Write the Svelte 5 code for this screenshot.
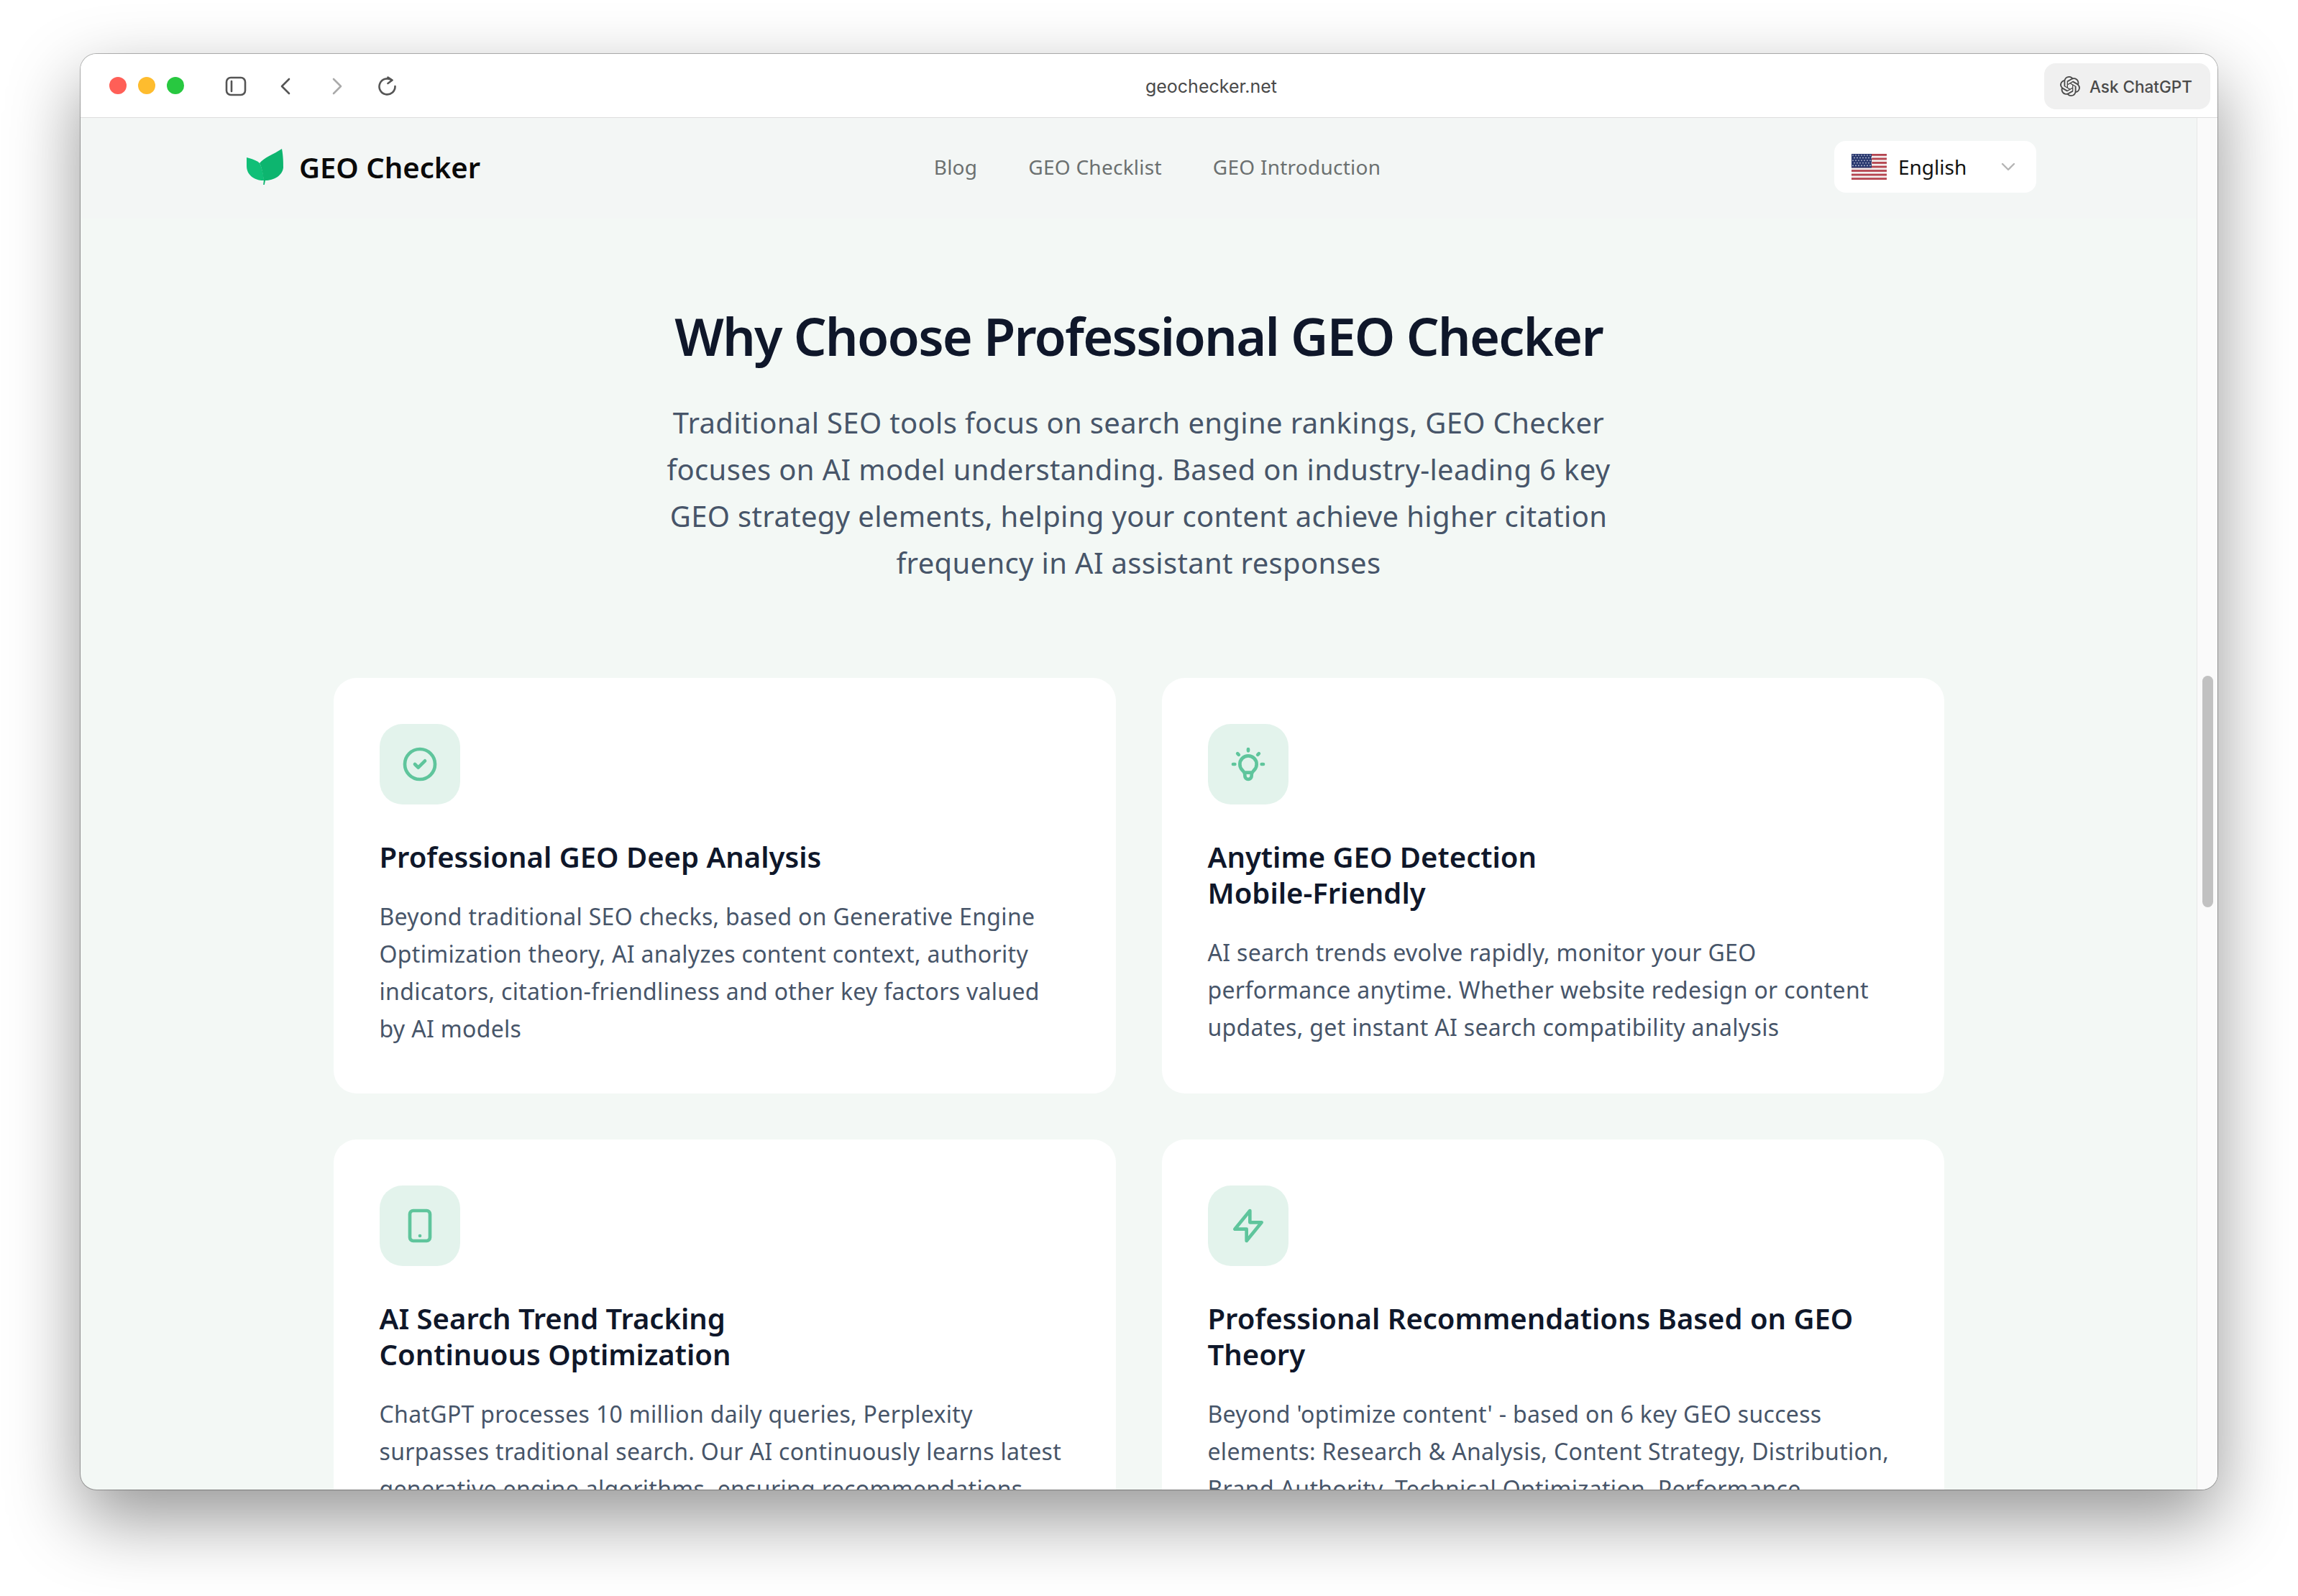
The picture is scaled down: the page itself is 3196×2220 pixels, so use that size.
<script lang="ts">
  const links = ["Blog", "GEO Checklist", "GEO Introduction"];

  const features = [
    {
      icon: ["M9 12l2 2 4-4m6 2a9 9 0 11-18 0 9 9 0 0118 0z"],
      title: ["Professional GEO Deep Analysis"],
      text: "Beyond traditional SEO checks, based on Generative Engine Optimization theory, AI analyzes content context, authority indicators, citation-friendliness and other key factors valued by AI models",
    },
    {
      icon: [
        "M9.663 17h4.673M12 3v1m6.364 1.636l-.707.707M21 12h-1M4 12H3m3.343-5.657l-.707-.707m2.828 9.9a5 5 0 117.072 0l-.548.547A3.374 3.374 0 0014 18.469V19a2 2 0 11-4 0v-.531c0-.895-.356-1.754-.988-2.386l-.548-.547z",
      ],
      title: ["Anytime GEO Detection", "Mobile-Friendly"],
      text: "AI search trends evolve rapidly, monitor your GEO performance anytime. Whether website redesign or content updates, get instant AI search compatibility analysis",
    },
    {
      icon: ["M12 18h.01M8 21h8a2 2 0 002-2V5a2 2 0 00-2-2H8a2 2 0 00-2 2v14a2 2 0 002 2z"],
      title: ["AI Search Trend Tracking", "Continuous Optimization"],
      text: "ChatGPT processes 10 million daily queries, Perplexity surpasses traditional search. Our AI continuously learns latest generative engine algorithms, ensuring recommendations",
    },
    {
      icon: ["M13 10V3L4 14h7v7l9-11h-7z"],
      title: ["Professional Recommendations Based on GEO", "Theory"],
      text: "Beyond 'optimize content' - based on 6 key GEO success elements: Research & Analysis, Content Strategy, Distribution, Brand Authority, Technical Optimization, Performance",
    },
  ];

  const stripes = [0, 1, 2, 3, 4, 5, 6];
  const dots: [number, number][] = [];
  for (let r = 0; r < 5; r++) {
    for (let c = 0; c < 7; c++) dots.push([2 + c * 4 + (r % 2) * 2, 2 + r * 3.6]);
  }
</script>

<div class="stage">
  <div class="window">
    <header class="toolbar">
      <div class="lights">
        <span class="light red"></span>
        <span class="light yellow"></span>
        <span class="light green"></span>
      </div>
      <div class="tools">
        <svg class="tool" width="30" height="28" viewBox="0 0 30 28" fill="none" stroke="#555" stroke-width="2.6">
          <rect x="2" y="2" width="26" height="24" rx="6" />
          <path d="M9 7v14" stroke-linecap="round" />
        </svg>
        <svg class="tool back" width="16" height="24" viewBox="0 0 16 24" fill="none" stroke="#555" stroke-width="2.6" stroke-linecap="round" stroke-linejoin="round">
          <path d="M13 2L3 12l10 10" />
        </svg>
        <svg class="tool forward" width="16" height="24" viewBox="0 0 16 24" fill="none" stroke="#aaa" stroke-width="2.6" stroke-linecap="round" stroke-linejoin="round">
          <path d="M3 2l10 10L3 22" />
        </svg>
        <svg class="tool reload" width="28" height="28" viewBox="0 0 28 28" fill="none" stroke="#555" stroke-width="2.6" stroke-linecap="round" stroke-linejoin="round">
          <path d="M21 5.5A11 11 0 1 0 25.5 14" />
          <path d="M15.5 1.5L21.5 5.500L15.500 10" />
        </svg>
      </div>
      <div class="address">geochecker.net</div>
      <button class="ask">
        <svg width="28" height="28" viewBox="0 0 24 24" fill="#4a4a4a">
          <path d="M22.2819 9.8211a5.9847 5.9847 0 0 0-.5157-4.9108 6.0462 6.0462 0 0 0-6.5098-2.9A6.0651 6.0651 0 0 0 4.9807 4.1818a5.9847 5.9847 0 0 0-3.9977 2.9 6.0462 6.0462 0 0 0 .7427 7.0966 5.98 5.98 0 0 0 .511 4.9107 6.051 6.051 0 0 0 6.5146 2.9001A5.9847 5.9847 0 0 0 13.2599 24a6.0557 6.0557 0 0 0 5.7718-4.2058 5.9894 5.9894 0 0 0 3.9977-2.9001 6.0557 6.0557 0 0 0-.7475-7.0729zm-9.022 12.6081a4.4755 4.4755 0 0 1-2.8764-1.0408l.1419-.0804 4.7783-2.7582a.7948.7948 0 0 0 .3927-.6813v-6.7369l2.02 1.1686a.071.071 0 0 1 .038.052v5.5826a4.504 4.504 0 0 1-4.4945 4.4944zm-9.6607-4.1254a4.4708 4.4708 0 0 1-.5346-3.0137l.142.0852 4.783 2.7582a.7712.7712 0 0 0 .7806 0l5.8428-3.3685v2.3324a.0804.0804 0 0 1-.0332.0615L9.74 19.9502a4.4992 4.4992 0 0 1-6.1408-1.6464zM2.3408 7.8956a4.485 4.485 0 0 1 2.3655-1.9728V11.6a.7664.7664 0 0 0 .3879.6765l5.8144 3.3543-2.0201 1.1685a.0757.0757 0 0 1-.071 0l-4.8303-2.7865A4.504 4.504 0 0 1 2.3408 7.872zm16.5963 3.8558L13.1038 8.364 15.1192 7.2a.0757.0757 0 0 1 .071 0l4.8303 2.7913a4.4944 4.4944 0 0 1-.6765 8.1042v-5.6772a.79.79 0 0 0-.407-.667zm2.0107-3.0231l-.142-.0852-4.7735-2.7818a.7759.7759 0 0 0-.7854 0L9.409 9.2297V6.8974a.0662.0662 0 0 1 .0284-.0615l4.8303-2.7866a4.4992 4.4992 0 0 1 6.6802 4.66zM8.3065 12.863l-2.02-1.1638a.0804.0804 0 0 1-.038-.0567V6.0742a4.4992 4.4992 0 0 1 7.3757-3.4537l-.142.0805L8.704 5.459a.7948.7948 0 0 0-.3927.6813zm1.0976-2.3654l2.602-1.4998 2.6069 1.4998v2.9994l-2.5974 1.4997-2.6067-1.4997Z" />
        </svg>
        <span>Ask ChatGPT</span>
      </button>
    </header>

    <div class="viewport">
      <main class="page">
        <nav class="nav">
          <a class="brand" href="#top">
            <svg width="51" height="50" viewBox="0 0 51 50">
              <path fill="#10bf77" d="M0 12C7 14 14 16 18 20 21 25 23.500 36 24 44L23.300 44C10 44 0 36 0 24Z" />
              <path fill="#0db56f" d="M18 20C24 12 37 8 49 0 51 10 51 20 51 26 50 37 38 44 26 44L24.800 50 23.200 50 23.800 44C23 36 21 25 18 20Z" />
            </svg>
            <span>GEO Checker</span>
          </a>
          <div class="links">
            {#each links as link}
              <a href="#top">{link}</a>
            {/each}
          </div>
          <div class="lang">
            <svg width="49" height="36" viewBox="0 0 49 36" class="flag">
              <rect width="49" height="36" rx="3" fill="#f2eeee" />
              {#each stripes as s}
                <rect y={s * 5.540} width="49" height="2.770" fill="#b5444f" />
              {/each}
              <rect width="28" height="19.400" fill="#2b3a70" />
              {#each dots as d}
                <circle cx={d[0]} cy={d[1]} r="0.800" fill="#dfe3ee" />
              {/each}
            </svg>
            <span class="lang-name">English</span>
            <svg class="caret" width="20" height="12" viewBox="0 0 20 12" fill="none" stroke="#b5b5b5" stroke-width="2.400" stroke-linecap="round" stroke-linejoin="round">
              <path d="M2 2l8 8 8-8" />
            </svg>
          </div>
        </nav>

        <section class="hero">
          <h1>Why Choose Professional GEO Checker</h1>
          <p class="lead">
            Traditional SEO tools focus on search engine rankings, GEO Checker focuses on AI model understanding. Based on industry-leading 6 key GEO strategy elements, helping your content achieve higher citation frequency in AI assistant responses
          </p>

          <div class="grid">
            {#each features as f}
              <article class="card">
                <div class="badge">
                  <svg width="56" height="56" viewBox="0 0 24 24" fill="none" stroke="#5fc59c" stroke-width="2" stroke-linecap="round" stroke-linejoin="round">
                    {#each f.icon as d}
                      <path {d} />
                    {/each}
                  </svg>
                </div>
                <h3>
                  {#each f.title as line}
                    <span>{line}</span>
                  {/each}
                </h3>
                <p>{f.text}</p>
              </article>
            {/each}
          </div>
        </section>
      </main>

      <aside class="scrollbar">
        <div class="thumb"></div>
      </aside>
    </div>
  </div>
</div>

<style>
  :global(body) {
    margin: 0;
    background: #fff;
  }

  .stage {
    width: 3196px;
    height: 2220px;
    box-sizing: border-box;
    padding: 75px 112px 148px;
    overflow: hidden;
    font-family: "Noto Sans", sans-serif;
  }

  .window {
    width: 2972px;
    height: 1997px;
    display: flex;
    flex-direction: column;
    border-radius: 22px;
    overflow: hidden;
    background: #f3f8f5;
    box-shadow:
      0 0 0 1px rgba(0, 0, 0, 0.28),
      0 40px 100px rgba(0, 0, 0, 0.42);
  }

  .toolbar {
    flex: none;
    height: 88px;
    box-sizing: content-box;
    display: flex;
    align-items: center;
    background: #fff;
    border-bottom: 1px solid #dedede;
    padding: 0 10px 0 40px;
  }

  .lights {
    display: flex;
    gap: 16px;
  }

  .light {
    width: 24px;
    height: 24px;
    border-radius: 50%;
  }

  .red {
    background: #ff5f57;
  }

  .yellow {
    background: #febc2e;
  }

  .green {
    background: #28c840;
  }

  .tools {
    display: flex;
    align-items: center;
    margin-left: 57px;
    padding-top: 2px;
  }

  .back {
    margin-left: 46px;
  }

  .forward {
    margin-left: 56px;
  }

  .reload {
    margin-left: 47px;
  }

  .address {
    flex: 1;
    padding: 2px 26px 0 0;
    text-align: center;
    font-family: Inter, sans-serif;
    font-size: 25px;
    color: #4a4a4a;
  }

  .ask {
    width: 231px;
    height: 64px;
    box-sizing: border-box;
    display: flex;
    align-items: center;
    gap: 13px;
    padding: 0 0 0 22px;
    margin-top: 2px;
    border: 0;
    border-radius: 16px;
    background: #f0f0f0;
    color: #4a4a4a;
    font-family: Inter, sans-serif;
    font-size: 22.500px;
    font-weight: 500;
  }

  .viewport {
    flex: 1;
    min-height: 0;
    display: flex;
  }

  .page {
    flex: 1;
    min-width: 0;
    overflow: hidden;
  }

  .nav {
    height: 140px;
    box-sizing: border-box;
    display: flex;
    align-items: center;
    justify-content: space-between;
    padding: 0 223px 4px 231px;
    background: #f3f6f5;
  }

  .brand {
    display: flex;
    align-items: center;
    gap: 22px;
    color: #0a0a0a;
    text-decoration: none;
    font-size: 40px;
    font-weight: 600;
  }

  .links {
    display: flex;
    gap: 71px;
  }

  .links a {
    color: #6b7070;
    text-decoration: none;
    font-size: 28px;
    letter-spacing: 0.009em;
  }

  .lang {
    width: 281px;
    height: 72px;
    box-sizing: border-box;
    display: flex;
    align-items: center;
    padding: 0 29px 0 24px;
    border-radius: 16px;
    background: #fff;
  }

  .flag {
    flex: none;
  }

  .lang-name {
    flex: 1;
    margin-left: 16px;
    font-size: 28px;
    color: #111;
  }

  .hero {
    padding-top: 123px;
    text-align: center;
  }

  h1 {
    margin: 0 0 48px;
    font-size: 72px;
    line-height: 80px;
    font-weight: 600;
    color: #0f172a;
    letter-spacing: -0.025em;
  }

  .lead {
    width: 1344px;
    margin: 0 auto;
    font-size: 40px;
    line-height: 65px;
    color: #475569;
    letter-spacing: 0.0085em;
  }

  .grid {
    width: 2240px;
    margin: 128px auto 0;
    display: grid;
    grid-template-columns: 1fr 1fr;
    gap: 64px;
    text-align: left;
  }

  .card {
    padding: 64px;
    border-radius: 32px;
    background: #fff;
  }

  .badge {
    width: 112px;
    height: 112px;
    display: flex;
    align-items: center;
    justify-content: center;
    border-radius: 32px;
    background: #e3f3ec;
  }

  h3 {
    margin: 48px 0 32px;
    font-size: 40px;
    line-height: 50px;
    font-weight: 600;
    color: #0f172a;
  }

  h3 span {
    display: block;
  }

  .card p {
    max-width: 952px;
    margin: 0;
    font-size: 32px;
    line-height: 52px;
    color: #475569;
    letter-spacing: 0.01em;
  }

  .scrollbar {
    flex: none;
    width: 29px;
    box-sizing: border-box;
    padding: 776px 6px 0 7px;
    background: #fafafa;
    border-left: 1px solid #e8e8e8;
  }

  .thumb {
    height: 322px;
    border-radius: 8px;
    background: #c1c1c1;
  }
</style>
